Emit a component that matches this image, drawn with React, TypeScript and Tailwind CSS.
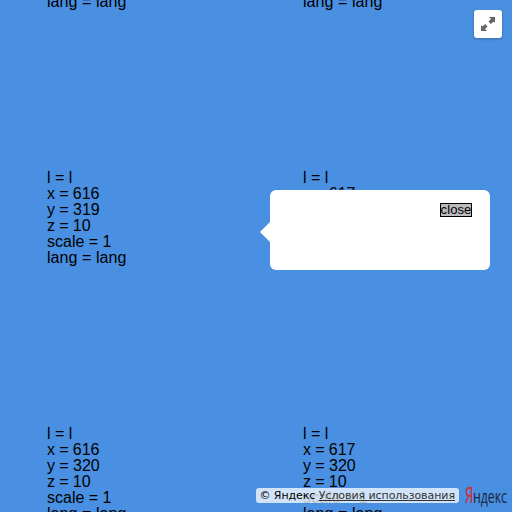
const tiles = [
  [616, 318], [617, 318], [616, 319], [617, 319], [616, 320], [617, 320],
];

function Tile({ x, y }: { x: number; y: number }) {
  return (
    <div className="flex h-64 flex-col pt-[170px] pl-[47px] text-base leading-4 text-black">
      <div>l = l</div>
      <div className="tracking-[-0.1px]">x = {x}</div>
      <div className="tracking-[-0.05px]">y = {y}</div>
      <div className="tracking-[-0.1px]">z = 10</div>
      <div>scale = 1</div>
      <div className="tracking-[0.06px]">lang = lang</div>
    </div>
  );
}

export default function App() {
  return (
    <div className="grid h-[512px] w-[512px] overflow-hidden bg-[#4a90e2] font-['Liberation_Sans',Arial,sans-serif]">
      <div className="col-start-1 row-start-1 -mt-64 grid h-[768px] grid-cols-2">
        {tiles.map(([x, y]) => (
          <Tile key={`${x}-${y}`} x={x} y={y} />
        ))}
      </div>
      <div className="z-10 col-start-1 row-start-1 flex h-[512px] flex-col pt-2.5">
        <button className="mr-2.5 flex h-7 w-7 items-center justify-center self-end rounded-[3px] bg-white shadow-[0_1px_2px_1px_rgba(0,0,0,0.15)]">
          <svg width="28" height="28" viewBox="0 0 28 28" fill="#656565">
            <path d="M15 7h6v6l-1.5-1.5-2.5 2.5-2.5-2.5 2.5-2.5zM13 21H7v-6l1.5 1.5 2.5-2.5 2.5 2.5-2.5 2.5z" />
          </svg>
        </button>
        <div className="mt-[152px] mr-[22px] flex items-center self-end">
          <div className="mt-1 h-0 w-0 border-y-[10px] border-r-[10px] border-y-transparent border-r-white" />
          <div className="flex h-20 w-[220px] items-start justify-end rounded-[6px] bg-white pt-[13px] pr-[18px]">
            <button className="flex h-[14px] w-8 items-center justify-center border border-black bg-[#bbb] pb-[2px] text-[13px] leading-none tracking-[0.1px]">
              close
            </button>
          </div>
        </div>
        <div className="mt-auto flex h-7 items-start justify-end pr-1">
          <div className="mt-1 h-[15px] w-[203px] rounded-[3px] bg-white/75 pl-[3.5px] font-['DejaVu_Sans',sans-serif] text-[11px] leading-[15px] tracking-[-0.07px] whitespace-nowrap text-black">
            © Яндекс <a className="text-[#333] underline">Условия использования</a>
          </div>
          <svg className="ml-[3px]" width="46" height="26">
            <text x="3" y="19" fontSize="21" fill="#df2630" stroke="#df2630" strokeWidth=".2" fontFamily="Open Sans" textLength="8.5" lengthAdjust="spacingAndGlyphs">Я</text>
            <text x="11" y="19" fontSize="19" fill="#1b2c45" stroke="#1b2c45" strokeWidth=".15" fontFamily="Open Sans" textLength="34" lengthAdjust="spacingAndGlyphs">ндекс</text>
          </svg>
        </div>
      </div>
    </div>
  );
}
